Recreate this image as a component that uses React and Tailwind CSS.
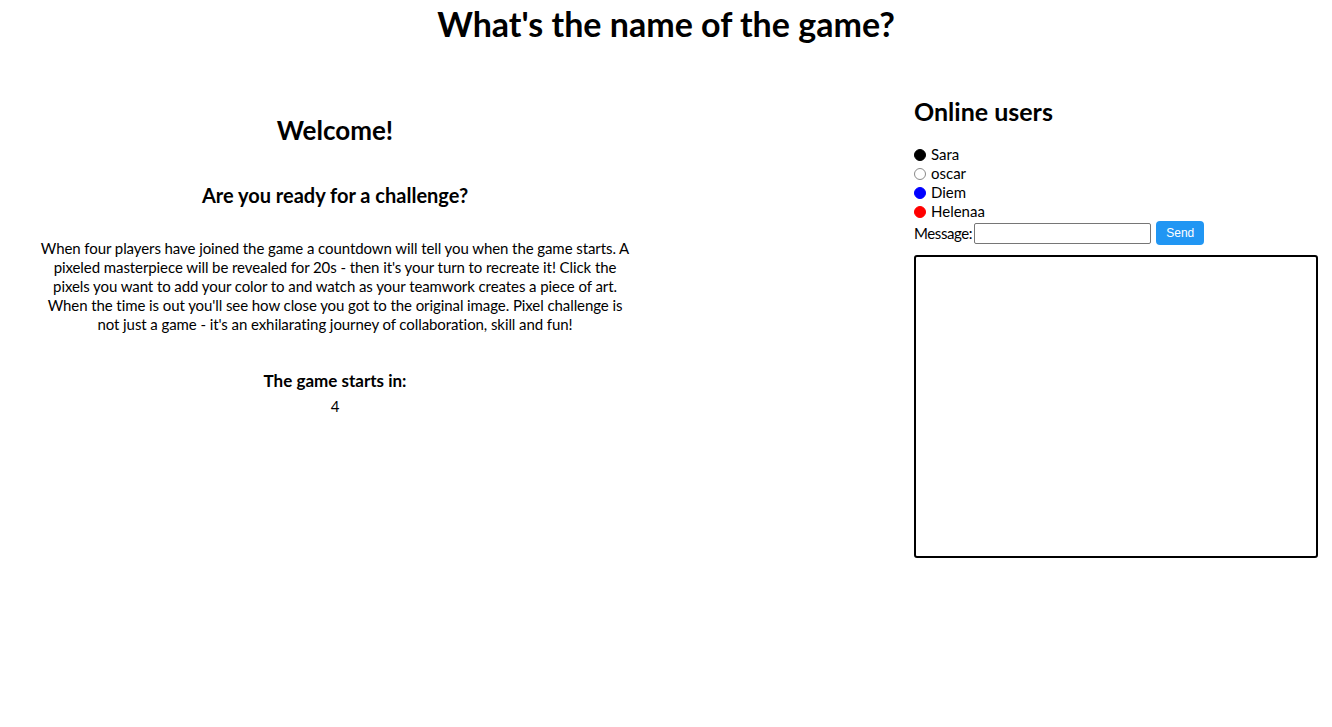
export default function App() {
  const users = [
    { name: "Sara", cls: "bg-black border border-black" },
    { name: "oscar", cls: "bg-white border border-[#8a8a8a]" },
    { name: "Diem", cls: "bg-[#0000ff] border border-[#0000ff]" },
    { name: "Helenaa", cls: "bg-[#ff0000] border border-[#ff0000]" },
  ];
  return (
    <div className="w-[1332px] h-[727px] bg-white text-black font-['Lato','Noto_Sans',sans-serif]">
      <h1 className="text-[34px] leading-[40px] pt-[4px] font-bold text-center h-[96px]">
        What's the name of the game?
      </h1>
      <div className="flex">
        <div className="w-[670px] flex flex-col items-center text-center">
          <h2 className="mt-[19px] text-[26px] leading-[30px] font-bold">Welcome!</h2>
          <h3 className="mt-[38px] text-[20px] leading-[24px] font-bold">Are you ready for a challenge?</h3>
          <p className="mt-[32px] text-[15px] leading-[19px] tracking-[-0.08px] whitespace-nowrap">
            When four players have joined the game a countdown will tell you when the game starts. A<br />
            pixeled masterpiece will be revealed for 20s - then it's your turn to recreate it! Click the<br />
            pixels you want to add your color to and watch as your teamwork creates a piece of art.<br />
            When the time is out you'll see how close you got to the original image. Pixel challenge is<br />
            not just a game - it's an exhilarating journey of collaboration, skill and fun!
          </p>
          <h4 className="mt-[37px] text-[17px] leading-[20px] font-bold">The game starts in:</h4>
          <div className="mt-[6px] text-[15px] leading-[19px]">4</div>
        </div>
        <div className="ml-[244px] w-[404px] flex flex-col">
          <h2 className="text-[25px] leading-[30px] font-bold">Online users</h2>
          <ul className="mt-[19px]">
            {users.map((u) => (
              <li key={u.name} className="flex items-center h-[19px] text-[15px]">
                <span className={"w-[12px] h-[12px] rounded-full " + u.cls}></span>
                <span className="ml-[5px]">{u.name}</span>
              </li>
            ))}
          </ul>
          <div className="flex items-center h-[24px] text-[15px]">
            <span className="tracking-[-0.4px]">Message:</span>
            <input className="ml-[2px] w-[177px] h-[21px] border border-[#767676] rounded-[2px] outline-none" />
            <button className="ml-[5px] w-[48px] h-[24px] bg-[#2196f3] text-white text-[12px] rounded-[4px] font-['Liberation_Sans',Arial,sans-serif]">
              Send
            </button>
          </div>
          <div className="mt-[10px] w-[404px] h-[303px] border-2 border-black rounded-[3px]"></div>
        </div>
      </div>
    </div>
  );
}
